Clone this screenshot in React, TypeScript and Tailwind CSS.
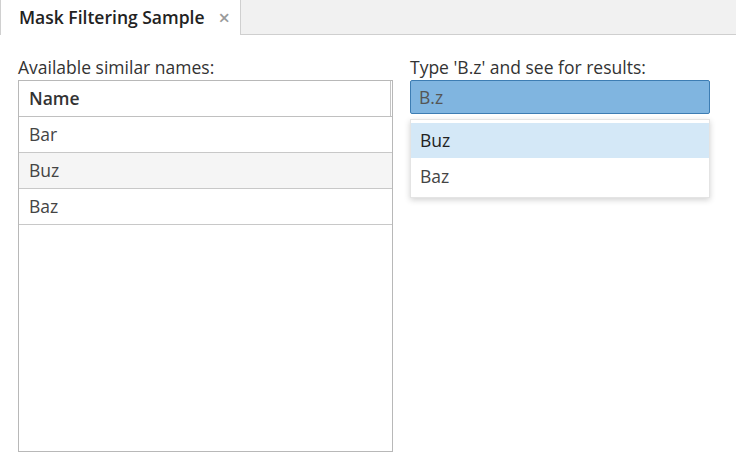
import React from "react";

export default function App() {
  const font = { fontFamily: '"Open Sans", "Liberation Sans", sans-serif' };
  return (
    <div className="w-[736px] h-[475px] bg-white text-[#333] overflow-hidden" style={font}>
      <div className="flex h-[35px]">
        <div className="w-[241px] h-[35px] border-l border-r border-[#d0d0d0] bg-white flex items-center pl-[18px] pr-[8px]">
          <span className="text-[17.5px] font-semibold text-[#222] leading-none">Mask Filtering Sample</span>
          <span className="ml-auto mr-[2px] text-[#9a9a9a] text-[20px] font-semibold leading-none">×</span>
        </div>
        <div className="flex-1 h-[35px] bg-[#f1f1f1] border-b border-[#cfcfcf]" />
      </div>
      <div className="flex pt-[19px]">
        <div className="ml-[18px] w-[375px]">
          <div className="text-[17.5px] leading-[26px] text-[#333]">Available similar names:</div>
          <div className="h-[372px] border border-[#b8b8b8] flex flex-col">
            <div className="h-[36px] border-b border-[#c0c0c0] flex">
              <div className="flex-1 border-r border-[#c4c4c4] flex items-center pl-[10px] text-[17.5px] font-semibold text-[#333] mr-[1px]">Name</div>
            </div>
            <div className="h-[36px] border-b border-[#c8c8c8] flex items-center pl-[10px] text-[17.5px] text-[#444]">Bar</div>
            <div className="h-[36px] border-b border-[#c8c8c8] flex items-center pl-[10px] text-[17.5px] text-[#444] bg-[#f5f5f5]">Buz</div>
            <div className="h-[36px] border-b border-[#c8c8c8] flex items-center pl-[10px] text-[17.5px] text-[#444]">Baz</div>
          </div>
        </div>
        <div className="ml-[17px] w-[300px]">
          <div className="text-[17.5px] leading-[26px] text-[#333]">Type 'B.z' and see for results:</div>
          <div className="h-[34px] bg-[#80b5e0] border border-[#3d7db3] rounded-[2px] flex items-center pl-[8px] text-[17.5px] text-[#555]">B.z</div>
          <div className="mt-[5px] bg-white border border-[#e4e4e4] shadow-[0_2px_6px_rgba(0,0,0,0.18)] py-[3px]">
            <div className="h-[35px] bg-[#d4e8f7] flex items-center pl-[9px] text-[17.5px] text-[#222]">Buz</div>
            <div className="h-[36px] flex items-center pl-[9px] text-[17.5px] text-[#444]">Baz</div>
          </div>
        </div>
      </div>
    </div>
  );
}
